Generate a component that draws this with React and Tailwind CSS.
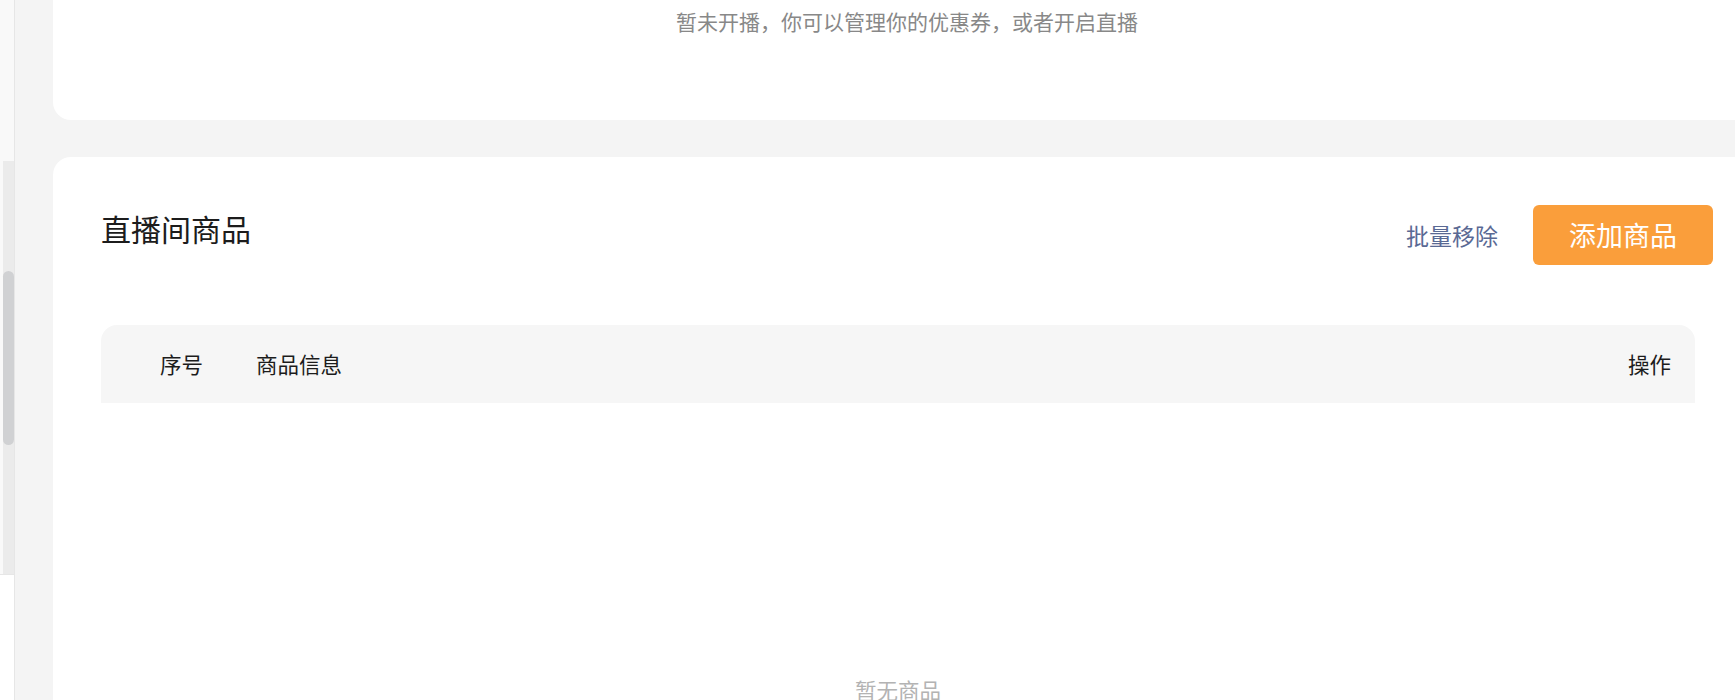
export default function App() {
  return (
    <div
      className="flex h-[700px] w-full overflow-hidden bg-white"
      style={{ fontFamily: '"Noto Sans CJK SC", "Noto Sans", sans-serif' }}
    >
      {/* left scrollbar strip */}
      <div className="flex w-[14px] shrink-0 flex-col">
        <div className="h-[161px] bg-[#f9f9f9]" />
        <div className="flex h-[413px] pl-[3px] bg-[#f9f9f9]">
          <div className="flex w-full flex-col bg-[#ebebeb]">
            <div className="h-[110px]" />
            <div className="h-[174px] rounded-full bg-[#d0d1d3]" />
          </div>
        </div>
        <div className="flex-1 border-t border-[#e6e6e6] bg-white" />
      </div>
      <div className="w-px shrink-0 bg-[#e6e6e6]" />

      <div className="flex min-w-0 flex-1 flex-col bg-[#f4f4f4] pl-[38px]">
        {/* top card */}
        <div className="h-[120px] shrink-0 rounded-bl-[18px] bg-white pt-[8px] pl-[26px] text-center">
          <p className="text-[21px] leading-[27px] text-[#888888]">
            暂未开播，你可以管理你的优惠券，或者开启直播
          </p>
        </div>

        {/* goods card */}
        <div className="mt-[37px] flex-1 rounded-tl-[18px] bg-white pl-[48px]">
          <div className="flex items-start justify-between pt-[48px] pr-[22px]">
            <h2 className="text-[30px] font-normal leading-[46px] text-[#1c1c1c]">
              直播间商品
            </h2>
            <div className="flex items-center">
              <button className="mr-[35px] text-[23px] text-[#5a6994]">
                批量移除
              </button>
              <button className="flex h-[60px] w-[180px] items-center justify-center rounded-[6px] bg-[#fa9e3b] text-[27px] text-white">
                添加商品
              </button>
            </div>
          </div>

          <div className="mr-[40px] mt-[60px]">
            <div className="flex h-[78px] items-center rounded-t-[16px] bg-[#f6f6f6] pl-[59px] pr-[24px] text-[21.5px] text-[#1c1c1c]">
              <span className="w-[96px]">序号</span>
              <span className="flex-1">商品信息</span>
              <span>操作</span>
            </div>
            <div className="mt-[276px] text-center text-[21.5px] leading-none text-[#b3b3b3]">
              暂无商品
            </div>
          </div>
        </div>
      </div>
    </div>
  );
}
